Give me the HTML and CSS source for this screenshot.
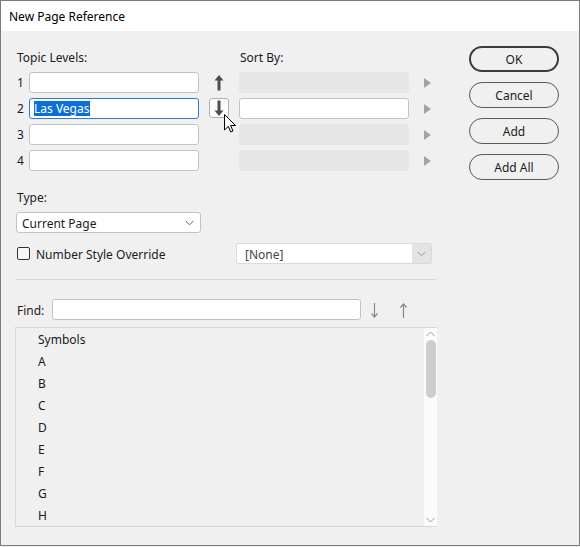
FILE: index.html
```html
<!DOCTYPE html>
<html>
<head>
<meta charset="utf-8">
<link rel="stylesheet" href="styles.css">
</head>
<body>
<div class="window">
  <div class="titlebar">New Page Reference</div>
  <div class="body">
    <div class="main">
      <div class="heads">
        <span class="head-topic">Topic Levels:</span>
        <span class="head-sort">Sort By:</span>
      </div>
      <div class="levels">
        <div class="level">
          <span class="num">1</span>
          <div class="field"></div>
          <div class="mover">
            <svg width="10" height="16" viewBox="0 0 10 16"><path d="M5 0 L9.5 5.5 H6.5 V15.5 H3.5 V5.5 H0.5 Z" fill="#4d4d4d"/></svg>
          </div>
          <div class="sortfield disabled"></div>
          <span class="tri"></span>
        </div>
        <div class="level">
          <span class="num">2</span>
          <div class="field focused"><span class="sel">Las Vegas</span></div>
          <div class="mover btn">
            <svg width="10" height="16" viewBox="0 0 10 16"><path d="M5 16 L9.5 10.5 H6.5 V0.5 H3.5 V10.5 H0.5 Z" fill="#4d4d4d"/></svg>
          </div>
          <div class="sortfield"></div>
          <span class="tri"></span>
        </div>
        <div class="level">
          <span class="num">3</span>
          <div class="field"></div>
          <div class="mover"></div>
          <div class="sortfield disabled"></div>
          <span class="tri"></span>
        </div>
        <div class="level">
          <span class="num">4</span>
          <div class="field"></div>
          <div class="mover"></div>
          <div class="sortfield disabled"></div>
          <span class="tri"></span>
        </div>
      </div>

      <div class="type-label">Type:</div>
      <div class="select type-select">
        <span>Current Page</span>
        <svg class="chev" width="9" height="6" viewBox="0 0 9 6"><path d="M0.5 0.8 L4.5 4.8 L8.5 0.8" fill="none" stroke="#666" stroke-width="1"/></svg>
      </div>

      <div class="override-row">
        <span class="checkbox"></span>
        <span class="check-label">Number Style Override</span>
        <div class="select none-select">
          <span class="none-text">[None]</span>
          <span class="none-btn">
            <svg width="9" height="6" viewBox="0 0 9 6"><path d="M0.5 0.8 L4.5 4.8 L8.5 0.8" fill="none" stroke="#9a9a9a" stroke-width="1"/></svg>
          </span>
        </div>
      </div>

      <div class="sep"></div>

      <div class="find-row">
        <span class="find-label">Find:</span>
        <div class="find-input"></div>
        <svg class="find-down" width="9" height="15" viewBox="0 0 9 15"><path d="M4.5 0 V14 M1.5 10.5 L4.5 14 L7.5 10.5" fill="none" stroke="#8a8a8a" stroke-width="1.2"/></svg>
        <svg class="find-up" width="9" height="15" viewBox="0 0 9 15"><path d="M4.5 15 V1 M1.5 4.5 L4.5 1 L7.5 4.5" fill="none" stroke="#8a8a8a" stroke-width="1.2"/></svg>
      </div>

      <div class="list">
        <div class="items">
          <div class="item">Symbols</div>
          <div class="item">A</div>
          <div class="item">B</div>
          <div class="item">C</div>
          <div class="item">D</div>
          <div class="item">E</div>
          <div class="item">F</div>
          <div class="item">G</div>
          <div class="item">H</div>
        </div>
        <div class="scrollbar">
          <svg class="sb-arrow" width="9" height="6" viewBox="0 0 9 6"><path d="M0.5 5 L4.5 1 L8.5 5" fill="none" stroke="#a0a0a0" stroke-width="1"/></svg>
          <div class="thumb"></div>
          <div class="sb-space"></div>
          <svg class="sb-arrow" width="9" height="6" viewBox="0 0 9 6"><path d="M0.5 1 L4.5 5 L8.5 1" fill="none" stroke="#a0a0a0" stroke-width="1"/></svg>
        </div>
      </div>
    </div>

    <div class="buttons">
      <div class="button default">OK</div>
      <div class="button">Cancel</div>
      <div class="button">Add</div>
      <div class="button">Add All</div>
    </div>
  </div>

  <svg class="cursor" width="13" height="20" viewBox="0 0 13 20"><path d="M0.5 0.5 V16 L4.3 12.3 L6.8 18 L9 17 L6.6 11.5 H11.5 Z" fill="#fff" stroke="#000" stroke-width="1" stroke-linejoin="round"/></svg>
</div>
</body>
</html>
```

FILE: styles.css
```css
html, body {
  margin: 0;
  padding: 0;
  background: #f0f0f0;
}

body {
  font-family: "Noto Sans", "Open Sans", sans-serif;
  font-size: 12px;
  color: #1b1b1b;
}

.window {
  position: relative;
  width: 580px;
  height: 546px;
  box-sizing: border-box;
  border: 1px solid #7a7a7a;
  background: #f0f0f0;
  overflow: hidden;
}

.titlebar {
  height: 30px;
  line-height: 31px;
  background: #ffffff;
  padding-left: 8px;
  color: #000;
}

.body {
  display: flex;
  padding-left: 15px;
}

.main {
  width: 421px;
  padding-top: 18px;
}

.heads {
  display: flex;
  height: 16px;
  line-height: 17px;
  margin-bottom: 7px;
}

.head-topic {
  padding-left: 1px;
  width: 223px;
}

.levels {
  display: flex;
  flex-direction: column;
  gap: 5px;
}

.level {
  display: flex;
  align-items: center;
  height: 21px;
}

.num {
  width: 13px;
  padding-left: 1px;
  box-sizing: border-box;
  line-height: 22px;
}

.field {
  width: 170px;
  height: 21px;
  box-sizing: border-box;
  border: 1px solid #c3c3c3;
  border-radius: 3px;
  background: #fff;
  display: flex;
  align-items: center;
  padding-left: 4px;
}

.field.focused {
  border-color: #2e7bd6;
}

.sel {
  background: #0a6fd6;
  color: #fff;
  line-height: 15px;
  padding-right: 1px;
}

.mover {
  width: 20px;
  height: 20px;
  margin-left: 10px;
  box-sizing: border-box;
  display: flex;
  align-items: center;
  justify-content: center;
}

.mover.btn {
  border: 1px solid #b0b0b0;
  border-radius: 3px;
  background: #fbfbfb;
  margin-top: -1px;
}

.sortfield {
  width: 170px;
  height: 21px;
  margin-left: 10px;
  box-sizing: border-box;
  border: 1px solid #c3c3c3;
  border-radius: 3px;
  background: #fff;
}

.sortfield.disabled {
  border-color: #e6e6e6;
  background: #e6e6e6;
}

.tri {
  width: 0;
  height: 0;
  margin-left: 15px;
  border-top: 5px solid transparent;
  border-bottom: 5px solid transparent;
  border-left: 7px solid #a3a3a3;
}

.type-label {
  margin-top: 18px;
  height: 16px;
  line-height: 17px;
  padding-left: 1px;
}

.select {
  box-sizing: border-box;
  height: 21px;
  border: 1px solid #c3c3c3;
  border-radius: 3px;
  background: #fff;
  display: flex;
  align-items: center;
}

.type-select {
  margin-top: 7px;
  width: 185px;
  padding-left: 5px;
  padding-right: 6px;
  padding-top: 1px;
  justify-content: space-between;
}

.override-row {
  margin-top: 10px;
  display: flex;
  align-items: center;
  height: 21px;
}

.checkbox {
  width: 13px;
  height: 13px;
  box-sizing: border-box;
  border: 1px solid #333;
  border-radius: 2px;
  background: #f7f7f7;
  margin-left: 1px;
}

.check-label {
  margin-left: 6px;
  flex: 1;
  padding-top: 1px;
}

.none-select {
  width: 196px;
  margin-right: 5px;
  border-color: #dadada;
  border-radius: 2px;
  overflow: hidden;
}

.none-text {
  flex: 1;
  padding-left: 8px;
  padding-top: 1px;
  color: #444;
}

.none-btn {
  width: 19px;
  height: 100%;
  background: #e3e3e3;
  display: flex;
  align-items: center;
  justify-content: center;
}

.sep {
  margin-top: 15px;
  width: 420px;
  height: 1px;
  background: #d6d6d6;
}

.find-row {
  margin-top: 19px;
  display: flex;
  align-items: center;
  height: 21px;
}

.find-label {
  width: 36px;
  padding-left: 1px;
  box-sizing: border-box;
  line-height: 21px;
  padding-top: 2px;
}

.find-input {
  width: 309px;
  height: 21px;
  box-sizing: border-box;
  border: 1px solid #c3c3c3;
  border-radius: 3px;
  background: #fff;
}

.find-down {
  margin-left: 9px;
  margin-top: 2px;
}

.find-up {
  margin-left: 20px;
  margin-top: 2px;
}

.list {
  margin-top: 7px;
  margin-left: -1px;
  width: 422px;
  height: 200px;
  box-sizing: border-box;
  border: 1px solid #d8d8d8;
  border-right: none;
  display: flex;
}

.items {
  flex: 1;
  padding-left: 22px;
  padding-top: 1px;
}

.item {
  height: 22px;
  line-height: 22px;
}

.scrollbar {
  width: 13px;
  background: #fbfbfb;
  display: flex;
  flex-direction: column;
  align-items: center;
}

.sb-arrow {
  margin-top: 3px;
  margin-bottom: 3px;
}

.thumb {
  width: 10px;
  height: 58px;
  border-radius: 5px;
  background: #cdcdcd;
  margin-left: 1px;
}

.sb-space {
  flex: 1;
}

.buttons {
  margin-left: 32px;
  padding-top: 15px;
  display: flex;
  flex-direction: column;
  gap: 10px;
}

.button {
  width: 90px;
  height: 26px;
  box-sizing: border-box;
  border: 1px solid #5a5a5a;
  border-radius: 13px;
  display: flex;
  align-items: center;
  justify-content: center;
  color: #1b1b1b;
}

.button.default {
  border: 2px solid #3c3c3c;
}

.cursor {
  position: absolute;
  left: 223px;
  top: 113px;
}
```
